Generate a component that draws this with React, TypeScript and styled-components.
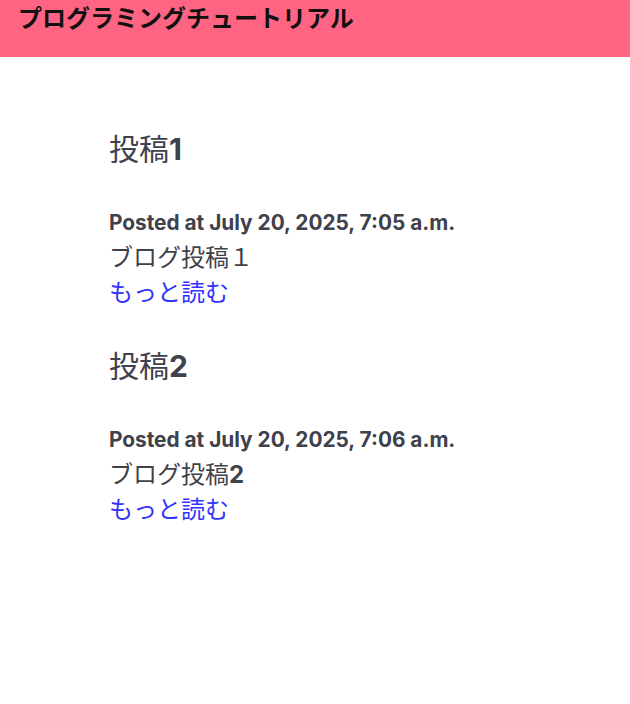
import React from "react";
import styled, { createGlobalStyle } from "styled-components";

const GlobalStyle = createGlobalStyle`
    body {
        margin: 0;
        background: #ffffff;
        font-family: Inter, "Noto Sans CJK JP", sans-serif;
        color: #3f414b;
    }
`;

const HeaderStyled = styled.header`
    background: #ff6482;
    height: 57px;
    padding: 3px 18px 0 18px;
    box-sizing: border-box;
`;

const SiteTitleStyled = styled.h1`
    margin: 0;
    font-size: 24px;
    line-height: 32px;
    font-weight: 700;
    color: #111111;
`;

const MainStyled = styled.main`
    display: flex;
    flex-direction: column;
    gap: 35px;
    padding: 71px 24px 0 109px;
`;

const PostStyled = styled.article`
    display: flex;
    flex-direction: column;
`;

const PostTitleStyled = styled.h2`
    margin: 0 0 35px 0;
    font-size: 30px;
    line-height: 42px;
    font-weight: 400;

    & b {
        font-weight: 700;
    }
`;

const PostedAtStyled = styled.p`
    margin: 0;
    font-size: 20.8px;
    line-height: 35px;
    font-weight: 700;
`;

const BodyStyled = styled.p`
    margin: 0;
    font-size: 24px;
    line-height: 35px;

    & b {
        font-weight: 700;
    }
`;

const ReadMoreStyled = styled.a`
    font-size: 24px;
    line-height: 35px;
    color: #3333ff;
    text-decoration: none;
`;

type TPost = {
    id: number;
    postedAt: string;
    body: React.ReactNode;
};

const posts: TPost[] = [
    { id: 1, postedAt: "July 20, 2025, 7:05 a.m.", body: "ブログ投稿１" },
    { id: 2, postedAt: "July 20, 2025, 7:06 a.m.", body: <>ブログ投稿<b>2</b></> },
];

export default function App() {
    return (
        <>
            <GlobalStyle />
            <HeaderStyled>
                <SiteTitleStyled>プログラミングチュートリアル</SiteTitleStyled>
            </HeaderStyled>

            {/* Post list */}
            <MainStyled>
                {posts.map((post) => (
                    <PostStyled key={post.id}>
                        <PostTitleStyled>
                            投稿<b>{post.id}</b>
                        </PostTitleStyled>
                        <PostedAtStyled>Posted at {post.postedAt}</PostedAtStyled>
                        <BodyStyled>{post.body}</BodyStyled>
                        <ReadMoreStyled href="#">もっと読む</ReadMoreStyled>
                    </PostStyled>
                ))}
            </MainStyled>
        </>
    );
}
